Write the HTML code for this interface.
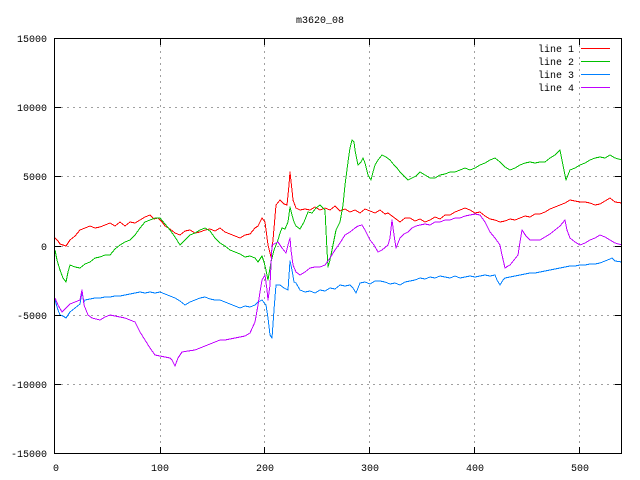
<!DOCTYPE html>
<html><head><meta charset="utf-8"><style>
html,body{margin:0;padding:0;background:#fff}
svg{display:block}
text{font-family:"Liberation Mono",monospace;font-size:10px;fill:#000}
</style></head><body>
<svg width="640" height="480" viewBox="0 0 640 480">
<g stroke="#a0a0a0" stroke-width="1" stroke-dasharray="2,4" fill="none" shape-rendering="crispEdges">
<line x1="160.5" y1="39" x2="160.5" y2="453"/>
<line x1="264.5" y1="39" x2="264.5" y2="453"/>
<line x1="369.5" y1="39" x2="369.5" y2="453"/>
<line x1="474.5" y1="39" x2="474.5" y2="453"/>
<line x1="579.5" y1="39" x2="579.5" y2="453"/>
<line x1="55" y1="107.5" x2="621" y2="107.5"/>
<line x1="55" y1="176.5" x2="621" y2="176.5"/>
<line x1="55" y1="246.5" x2="621" y2="246.5"/>
<line x1="55" y1="315.5" x2="621" y2="315.5"/>
<line x1="55" y1="384.5" x2="621" y2="384.5"/>
</g>
<g fill="none" stroke-width="1" stroke-linejoin="round" shape-rendering="crispEdges">
<polyline stroke="#ff0000" points="55,238 58,241 60,244 63,245 66,246 70,240 75,236 80,230 85,228 90,226 95,228 100,227 105,225 110,223 115,226 120,222 125,226 130,222 135,223 140,220 145,217 150,215 154,219 158,218 162,222 165,226 170,229 175,233 180,235 185,231 190,230 195,233 200,232 205,230 210,229 215,231 220,228 225,232 230,234 235,236 240,238 245,235 250,234 255,228 258,226 262,218 265,222 268,245 271,257 273,240 276,205 280,200 284,204 287,205 289,185 290,172 292,190 293,200 296,208 300,210 305,209 310,210 315,207 320,210 325,208 330,210 335,206 340,211 345,209 350,212 355,210 360,213 365,209 370,211 375,213 380,210 385,214 388,213 392,216 396,219 400,222 405,218 410,218 415,221 420,219 425,222 430,220 435,217 440,219 445,215 450,215 455,212 460,210 465,208 470,210 475,213 480,212 485,216 490,219 495,220 500,222 505,221 510,219 515,220 520,218 525,216 530,217 535,214 540,214 545,212 550,209 555,207 560,205 565,203 570,200 575,201 580,202 585,202 590,203 595,205 600,204 605,201 610,198 615,202 622,203"/>
<polyline stroke="#00c000" points="55,250 57,260 60,270 63,278 66,282 68,272 70,265 75,267 80,268 85,264 90,262 95,258 100,257 105,255 110,255 115,249 120,245 125,242 130,240 135,235 140,228 145,222 150,220 155,218 160,218 165,224 170,230 175,237 180,245 185,240 190,235 195,233 200,230 205,228 210,231 215,238 220,243 225,246 230,250 235,252 240,254 245,257 250,256 255,258 258,262 262,256 264,262 266,270 268,280 271,262 274,250 276,245 278,240 280,233 282,228 285,229 288,222 290,207 292,215 294,222 296,226 300,229 304,222 308,212 312,213 316,208 320,205 323,208 325,210 326,230 327,250 328,267 330,260 333,245 336,230 340,222 343,205 345,185 348,162 350,148 352,140 354,142 355,150 357,160 358,165 361,162 363,158 365,163 368,175 371,180 373,172 375,165 378,160 382,155 386,157 390,160 394,165 397,168 400,172 404,176 408,180 412,178 416,176 420,172 425,175 430,178 435,178 440,175 445,174 450,172 455,172 460,170 465,168 470,170 475,168 480,165 485,163 490,160 495,158 500,162 505,167 510,170 515,168 520,165 525,163 530,162 535,163 540,162 545,162 550,158 555,155 558,152 560,150 562,160 566,180 568,175 570,170 575,168 580,165 585,163 590,160 595,158 600,157 605,158 610,155 615,158 622,160"/>
<polyline stroke="#0080ff" points="55,300 58,310 60,315 63,316 66,318 70,312 75,308 80,304 82,292 84,302 85,300 90,299 95,298 100,298 105,297 110,297 115,296 120,296 125,295 130,294 135,293 140,292 145,293 150,292 155,293 160,292 165,294 170,296 175,298 180,301 185,305 190,302 195,300 200,298 205,297 210,299 215,300 220,300 225,302 230,304 235,306 240,308 245,306 250,307 255,305 258,302 262,300 266,305 268,318 270,335 272,338 274,310 276,285 280,285 284,288 288,290 290,261 292,270 294,282 296,283 300,290 305,292 310,291 315,293 320,290 325,291 330,288 335,289 340,285 345,286 350,285 353,288 356,293 358,288 360,283 365,282 370,284 375,281 380,281 385,282 390,284 395,283 400,285 405,282 410,281 415,280 420,278 425,279 430,277 435,278 440,276 445,277 450,278 455,276 460,278 465,277 470,276 475,277 480,276 485,275 490,276 495,275 497,280 500,285 503,280 505,278 510,277 515,276 520,275 525,274 530,273 535,273 540,272 545,271 550,270 555,269 560,268 565,267 570,266 575,266 580,265 585,265 590,264 595,264 600,263 605,261 610,259 612,258 615,261 622,262"/>
<polyline stroke="#c000ff" points="55,298 58,305 62,312 66,308 70,304 75,302 80,300 82,290 84,305 88,315 92,318 96,319 100,320 105,317 110,315 115,316 120,317 125,318 130,320 135,322 140,332 145,340 150,348 155,355 160,356 165,357 170,358 172,360 174,364 175,366 178,358 182,352 188,351 195,350 200,348 205,346 210,344 215,342 220,340 225,340 230,339 235,338 240,337 245,336 250,333 255,322 258,305 260,292 262,280 265,275 267,290 268,300 270,285 272,245 274,244 278,242 282,248 286,253 288,245 290,238 291,250 293,265 296,272 300,275 305,272 310,268 315,267 320,267 325,265 330,258 335,250 340,243 345,235 350,232 355,228 358,226 362,225 365,230 370,240 374,245 378,252 382,250 388,245 390,238 392,220 394,235 396,248 400,238 404,234 408,232 412,228 416,226 420,225 425,224 430,225 435,222 440,222 445,220 450,220 455,218 460,218 465,216 470,215 475,214 480,215 485,222 490,232 495,238 500,245 502,255 505,268 508,266 510,265 514,260 518,255 520,242 522,230 526,236 530,240 535,240 540,240 545,237 550,234 555,230 560,226 565,220 567,230 570,238 575,242 580,245 585,243 590,240 595,238 600,235 605,237 610,240 615,243 622,245"/>
</g>
<g stroke="#000" stroke-width="1" fill="none" shape-rendering="crispEdges">
<rect x="54.5" y="38.5" width="567" height="415"/>
<path d="M55 107.5h6M55 176.5h6M55 246.5h6M55 315.5h6M55 384.5h6M621 107.5h-6M621 176.5h-6M621 246.5h-6M621 315.5h-6M621 384.5h-6M160.5 453v-6M264.5 453v-6M369.5 453v-6M474.5 453v-6M579.5 453v-6M160.5 39v6M264.5 39v6M369.5 39v6M474.5 39v6M579.5 39v6"/>
</g>
<g stroke-width="1" shape-rendering="crispEdges">
<line x1="581" y1="48.5" x2="610" y2="48.5" stroke="#ff0000"/>
<line x1="581" y1="61.5" x2="610" y2="61.5" stroke="#00c000"/>
<line x1="581" y1="74.5" x2="610" y2="74.5" stroke="#0080ff"/>
<line x1="581" y1="87.5" x2="610" y2="87.5" stroke="#c000ff"/>
</g>
<g text-anchor="end">
<text x="574" y="52">line 1</text>
<text x="574" y="65">line 2</text>
<text x="574" y="78">line 3</text>
<text x="574" y="91">line 4</text>
<text x="47" y="42">15000</text>
<text x="47" y="111">10000</text>
<text x="47" y="180">5000</text>
<text x="47" y="250">0</text>
<text x="47" y="319">-5000</text>
<text x="47" y="388">-10000</text>
<text x="47" y="457">-15000</text>
</g>
<g text-anchor="middle">
<text x="320" y="23">m3620_08</text>
<text x="56" y="471">0</text>
<text x="160" y="471">100</text>
<text x="265" y="471">200</text>
<text x="370" y="471">300</text>
<text x="475" y="471">400</text>
<text x="580" y="471">500</text>
</g>
</svg>
</body></html>
